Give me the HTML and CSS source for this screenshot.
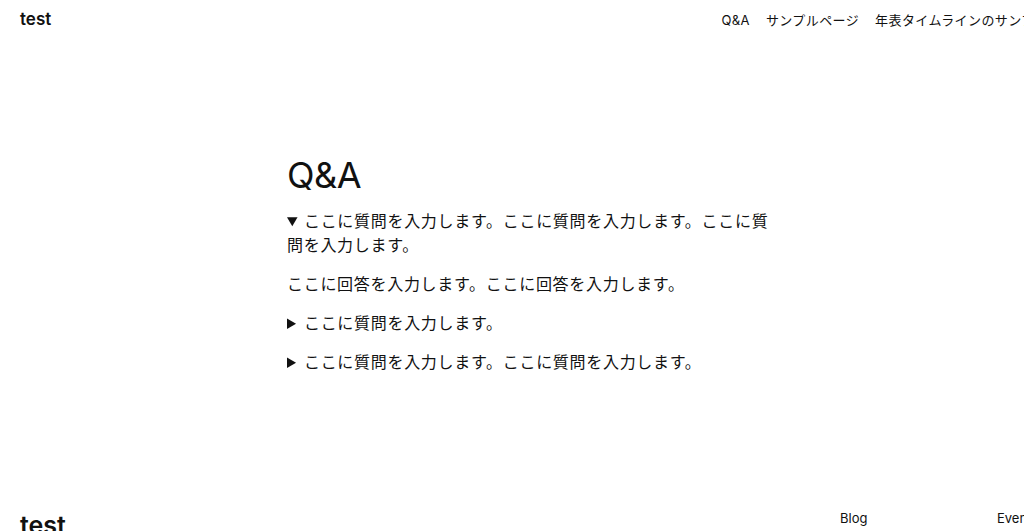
FILE: index.html
```html
<!DOCTYPE html>
<html lang="ja">
  <head>
    <meta charset="UTF-8" />
    <meta name="viewport" content="width=device-width, initial-scale=1.0" />
    <title>Q&amp;A – test</title>
    <link rel="stylesheet" href="styles.css">
  </head>
  <body>
    <div class="page">
      <header class="site-header">
        <a class="site-title" href="#">test</a>
        <nav class="site-nav">
          <a href="#">Q&amp;A</a>
          <a href="#">サンプルページ</a>
          <a href="#">年表タイムラインのサンプル</a>
        </nav>
      </header>

      <main class="content">
        <h1 class="page-title">Q&amp;A</h1>

        <details class="faq" open>
          <summary>ここに質問を入力します。ここに質問を入力します。ここに質問を入力します。</summary>
          <p>ここに回答を入力します。ここに回答を入力します。</p>
        </details>

        <details class="faq">
          <summary>ここに質問を入力します。</summary>
          <p>ここに回答を入力します。</p>
        </details>

        <details class="faq">
          <summary>ここに質問を入力します。ここに質問を入力します。</summary>
          <p>ここに回答を入力します。</p>
        </details>
      </main>

      <footer class="site-footer">
        <a class="footer-title" href="#">test</a>
        <div class="footer-links">
          <div class="footer-col"><a href="#">Blog</a></div>
          <div class="footer-col"><a href="#">Events</a></div>
        </div>
      </footer>
    </div>
  </body>
</html>
```

FILE: styles.css
```css
body {
  margin: 0;
  overflow: hidden;
  background: #fff;
  color: #111;
  font-family: Inter, "Noto Sans CJK JP", sans-serif;
}
a {
  color: inherit;
  text-decoration: none;
}
.page {
  width: 1074px;
}

/* header */
.site-header {
  display: flex;
  justify-content: space-between;
  align-items: center;
  padding: 9px 26px 9px 20px;
}
.site-title {
  font-size: 17px;
  font-weight: 600;
}
.site-nav {
  display: flex;
  align-items: baseline;
  gap: 16px;
  font-size: 13px;
  letter-spacing: 0.4px;
  white-space: nowrap;
}

/* main column */
.content {
  box-sizing: border-box;
  width: 500px;
  margin: 0 auto;
  padding: 116px 8px 112px 0;
  font-size: 16px;
  line-height: 1.5;
  letter-spacing: 0.7px;
}
.page-title {
  margin: 0 0 12px;
  font-size: 36px;
  font-weight: 400;
  line-height: 1.2;
  letter-spacing: -0.5px;
}
.faq {
  margin: 0 0 15px;
}
.faq summary {
  cursor: pointer;
}
.faq p {
  margin: 15px 0 0;
}

/* footer */
.site-footer {
  display: flex;
  justify-content: space-between;
  align-items: flex-start;
  padding: 0 20px;
}
.footer-title {
  margin-top: 9px;
  font-size: 25px;
  font-weight: 600;
}
.footer-links {
  display: flex;
  padding-top: 9px;
  font-size: 13px;
}
.footer-col {
  width: 157px;
}
.footer-col:last-child {
  width: 57px;
}
```
